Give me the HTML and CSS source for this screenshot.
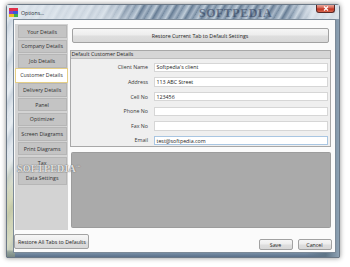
FILE: index.html
```html
<!DOCTYPE html>
<html>
<head>
<meta charset="utf-8">
<link rel="stylesheet" href="styles.css">
</head>
<body>
<div class="window">
  <div class="titlebar">
    <svg class="appicon" width="9" height="9" viewBox="0 0 9 9">
      <rect x="0" y="0" width="9" height="3" fill="#e0304a"/>
      <rect x="0" y="3" width="4" height="3" fill="#8a3cc8"/>
      <rect x="4" y="3" width="5" height="3" fill="#3a58d8"/>
      <rect x="0" y="6" width="5" height="3" fill="#f0c020"/>
      <rect x="5" y="6" width="4" height="3" fill="#40b048"/>
    </svg>
    <span class="title">Options...</span>
    <span class="wm-title">SOFTPEDIA</span>
    <div class="close">
      <svg width="6" height="5" viewBox="0 0 6 5"><path d="M1 0.5 L5 4.5 M5 0.5 L1 4.5" stroke="#fff" stroke-width="1.2"/></svg>
    </div>
  </div>
  <div class="client">
    <div class="top">
      <div class="sidebar">
        <div class="tab">Your Details</div>
        <div class="tab">Company Details</div>
        <div class="tab">Job Details</div>
        <div class="tab selected">Customer Details</div>
        <div class="tab">Delivery Details</div>
        <div class="tab">Panel</div>
        <div class="tab">Optimizer</div>
        <div class="tab">Screen Diagrams</div>
        <div class="tab">Print Diagrams</div>
        <div class="tab tax">Tax</div>
        <div class="tab">Data Settings</div>
      </div>
      <div class="main">
        <div class="btn restore-tab">Restore Current Tab to Default Settings</div>
        <div class="group">
          <div class="group-head">Default Customer Details</div>
          <div class="form">
            <div class="lbl">Client Name</div><div class="tb">Softpedia's client</div>
            <div class="lbl">Address</div><div class="tb">113 ABC Street</div>
            <div class="lbl">Cell No</div><div class="tb">123456</div>
            <div class="lbl">Phone No</div><div class="tb"></div>
            <div class="lbl">Fax No</div><div class="tb"></div>
            <div class="lbl">Email</div><div class="tb focus">test@softpedia.com</div>
          </div>
        </div>
        <div class="graybox"></div>
      </div>
    </div>
    <div class="bottom">
      <div class="btn restore-all">Restore All Tabs to Defaults</div>
      <div class="actions">
        <div class="btn small">Save</div>
        <div class="btn small">Cancel</div>
      </div>
    </div>
  </div>
  <span class="wm-tax">SOFTPEDIA<sup>™</sup></span>
</div>
</body>
</html>
```

FILE: styles.css
```css
html, body {
  margin: 0;
  padding: 0;
  background: #ffffff;
}
body {
  width: 350px;
  height: 267px;
  overflow: hidden;
  font-family: "Open Sans", "Noto Sans", sans-serif;
  font-size: 5.3px;
  color: #2a2a2a;
}
.window {
  position: relative;
  margin: 4px 0 0 6px;
  width: 334px;
  height: 254px;
  display: flex;
  flex-direction: column;
  border-radius: 3px 3px 1px 1px;
  border: 1px solid #6b7886;
  box-sizing: border-box;
  box-shadow: 0 0 5px rgba(0,0,0,0.45);
  background:
    linear-gradient(180deg, rgba(255,255,255,0) 60%, rgba(190,190,120,0.55) 80%, rgba(190,190,120,0.3) 100%) left top / 8px 100% no-repeat,
    linear-gradient(90deg, rgba(255,255,255,0) 90%, #5e7486 96%, #8ea2b4 100%),
    linear-gradient(180deg, rgba(255,255,255,0) 97%, #7f95ab 98%, #5a708a 100%),
    repeating-linear-gradient(115deg, #dde5ec 0px, #e7edf2 6px, #ccd6e0 10px, #e3e9ef 16px);
}
.titlebar {
  position: relative;
  height: 14px;
  display: flex;
  align-items: center;
  padding-left: 2px;
  background:
    linear-gradient(90deg, rgba(230,236,242,0.92) 0%, rgba(230,236,242,0.7) 30%, rgba(70,90,115,0.0) 40%, rgba(70,90,115,0.0) 85%, rgba(230,236,242,0.85) 92%),
    repeating-linear-gradient(120deg, #8599ae 0px, #bfccd8 4px, #667c94 7px, #aab9c9 11px, #74899f 14px);
}
.appicon {
  display: block;
  margin-right: 3px;
  margin-top: 1px;
}
.title {
  color: #1e2a36;
  font-size: 5.2px;
  margin-top: 1px;
}
.wm-title {
  position: absolute;
  left: 192px;
  top: 1px;
  font-family: "Liberation Serif", serif;
  font-weight: bold;
  font-size: 12px;
  letter-spacing: 0.5px;
  color: rgba(30,45,75,0.5);
}
.close {
  margin-left: auto;
  margin-right: 4px;
  align-self: flex-start;
  width: 19px;
  height: 8px;
  border: 1px solid #5a2a28;
  border-top: none;
  border-radius: 0 0 3px 3px;
  background: linear-gradient(180deg, #e8a89c 0%, #d4604e 45%, #c0301e 55%, #d86850 100%);
  display: flex;
  align-items: center;
  justify-content: center;
  box-sizing: border-box;
}
.close svg { display: block; }
.client {
  flex: 1;
  margin: 0 3px 4px 6px;
  background: #fbfbfb;
  border: 1px solid #7c8a98;
  display: flex;
  flex-direction: column;
}
.top {
  display: flex;
  padding-top: 3.5px;
  gap: 2px;
}
.sidebar {
  width: 53px;
  height: 206.5px;
  margin-left: 0.5px;
  background: #d3d3d3;
  box-sizing: border-box;
  padding: 1.5px 1px 0 3.2px;
  display: flex;
  flex-direction: column;
  gap: 1.4px;
}
.tab {
  height: 13.3px;
  flex: none;
  background: #c4c4c4;
  border: 0.5px solid #b6b6b6;
  box-sizing: border-box;
  display: flex;
  align-items: center;
  justify-content: center;
  color: #303030;
  white-space: nowrap;
}
.tab.tax {
  align-items: flex-start;
  padding-top: 1px;
}
.tab.selected {
  height: 15px;
  margin: -1.4px -1px -0.7px -2.3px;
  background: #ffffff;
  border: 0.7px solid #e6cf86;
}
.main {
  width: 261px;
  display: flex;
  flex-direction: column;
}
.btn {
  box-sizing: border-box;
  border: 0.7px solid #a2a2a2;
  border-radius: 2px;
  background: linear-gradient(180deg, #f6f6f6 0%, #ececec 48%, #dedede 52%, #d8d8d8 100%);
  display: flex;
  align-items: center;
  justify-content: center;
  color: #262626;
  white-space: nowrap;
}
.restore-tab {
  margin: 4.5px 2px 0 2px;
  height: 15px;
}
.group {
  margin-top: 7px;
  height: 97px;
  box-sizing: border-box;
  border: 1.2px solid #a8a8a8;
  background: #efefef;
}
.group-head {
  height: 7px;
  background: #d6d6d6;
  border-bottom: 0.7px solid #bdbdbd;
  padding-left: 1px;
  line-height: 7px;
  color: #262626;
}
.form {
  display: grid;
  grid-template-columns: 77.5px 1fr;
  column-gap: 6px;
  row-gap: 5.25px;
  padding: 3.6px 2px 0 0;
  align-items: center;
}
.lbl {
  text-align: right;
  color: #383838;
}
.tb {
  height: 9.4px;
  box-sizing: border-box;
  background: #ffffff;
  border: 0.6px solid #d6d6d6;
  padding-left: 1.5px;
  display: flex;
  align-items: center;
  color: #222;
}
.tb.focus {
  border-color: #a9c6e2;
}
.graybox {
  margin: 4.7px 0 0 1px;
  height: 76px;
  background: #aaaaaa;
  border: 0.6px solid #9c9c9c;
  border-radius: 1.5px;
  box-sizing: border-box;
}
.bottom {
  flex: 1;
  display: flex;
  justify-content: space-between;
  padding: 4px 3.5px 0 0.3px;
}
.restore-all {
  width: 75px;
  height: 15px;
}
.actions {
  display: flex;
  gap: 5px;
  padding-top: 5px;
}
.small {
  width: 34px;
  height: 11px;
}
.wm-tax {
  position: absolute;
  left: 10px;
  top: 158px;
  font-family: "Liberation Serif", serif;
  font-size: 10px;
  font-weight: bold;
  color: rgba(255,255,255,0.8);
  text-shadow: 0 0 1px #6a6a6a, 0 0 1px #6a6a6a;
  letter-spacing: 0.2px;
}
.wm-tax sup {
  font-size: 4px;
}
```
